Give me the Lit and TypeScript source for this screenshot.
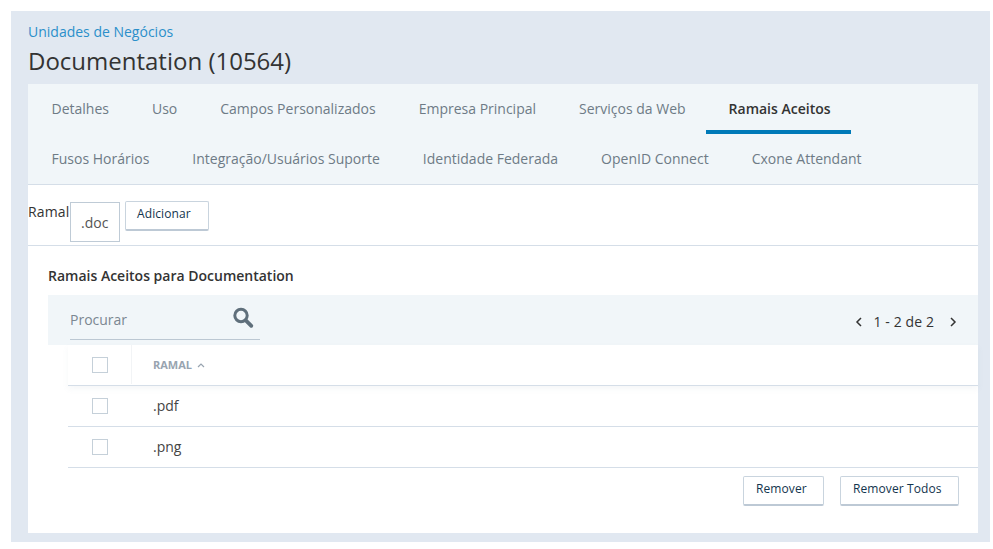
import { LitElement, html, css } from "lit";
import { customElement } from "lit/decorators.js";

const row1 = ["Detalhes", "Uso", "Campos Personalizados", "Empresa Principal", "Serviços da Web", "Ramais Aceitos"];
const row2 = ["Fusos Horários", "Integração/Usuários Suporte", "Identidade Federada", "OpenID Connect", "Cxone Attendant"];

@customElement("app-root")
export class AppRoot extends LitElement {
  static styles = css`
    :host { display: block; width: 993px; height: 549px; background: #fff; font-family: "Open Sans", sans-serif; color: #333; overflow: hidden; }
    * { box-sizing: border-box; }
    .panel { margin: 11px 3px 0 11px; height: 531px; background: #e1e8f1; padding: 11px 12px 9px 17px; display: flex; flex-direction: column; }
    .crumb { font-size: 14px; line-height: 19px; color: #2b8fca; }
    .title { font-size: 24px; line-height: 33px; color: #333; margin-top: 3px; height: 40px; }
    .card { flex: 1; background: #fff; display: flex; flex-direction: column; }
    .tabs { background: #f1f6f9; border-bottom: 1px solid #d5dee8; height: 101px; padding-left: 2px; }
    .tabrow { display: flex; height: 50px; }
    .tab { font-size: 14px; line-height: 50px; height: 50px; padding: 0 21.5px; color: #6e7b86; white-space: nowrap; }
    .tab.active { color: #333; font-weight: 600; border-bottom: 4px solid #007ab8; margin-left: -1.5px; padding: 0 20px 0 23px; }
    .form { height: 61px; border-bottom: 1px solid #d5dee8; display: flex; align-items: flex-start; }
    .form label { font-size: 14px; line-height: 19px; margin-top: 17px; color: #333; width: 42px; letter-spacing: 0.15px; }
    .input { width: 50px; height: 40px; margin-top: 17px; border: 1px solid #bfcbd6; font-size: 14px; line-height: 40px; padding-left: 10px; color: #555; }
    .btn { font-family: inherit; background: #fff; border: 1px solid #c9d4de; border-bottom: 2px solid #bdc9d5; border-radius: 2px; font-size: 12px; font-weight: 500; color: #12344d; padding: 0 0 0 12px; height: 30px; display: flex; align-items: flex-start; justify-content: flex-start; line-height: 23px; letter-spacing: 0.1px; }
    .add { width: 84px; margin: 16px 0 0 5px; padding-left: 11px; }
    .body { padding: 0 0 0 20px; display: flex; flex-direction: column; flex: 1; }
    h2 { margin: 20px 0 0; font-size: 14px; line-height: 19px; font-weight: 600; color: #333; height: 29px; }
    .toolbar { height: 50px; background: #f1f6f9; display: flex; align-items: flex-start; justify-content: space-between; padding: 0 21px 0 22px; }
    .search { width: 190px; height: 45px; border-bottom: 1px solid #bcc8d3; display: flex; justify-content: space-between; padding-right: 6px; font-size: 14px; color: #7b8791; line-height: 49px; }
    .search svg { margin-top: 12px; }
    .pager { display: flex; align-items: center; height: 53px; font-size: 14px; color: #333; }
    .pager svg:first-child { margin-left: 1px; }
    .pager span { margin: 0 15px 0 10.5px; letter-spacing: 0.1px; }
    .table { margin-left: 20px; }
    .head, .row { display: flex; align-items: stretch; border-bottom: 1px solid #d5dee8; }
    .head { height: 41px; box-shadow: 0 3px 6px rgba(120,140,160,0.07); }
    .row { height: 41px; }
    .cb { width: 64px; display: flex; align-items: center; justify-content: center; }
    .head .cb { border-right: 1px solid #f2f4f6; margin-bottom: 1px; }
    .box { display: block; width: 16px; height: 16px; border: 1px solid #c5d0d9; background: #fff; }
    .cell { font-size: 14px; padding: 0 0 2px 21px; display: flex; align-items: center; color: #444; }
    .th { font-size: 11px; font-weight: 700; color: #98a4b0; gap: 5px; padding-bottom: 1px; }
    .actions { display: flex; justify-content: flex-end; gap: 16px; padding: 8px 19px 0 0; }
    .rm1 { width: 81px; height: 30px; }
    .rm2 { width: 119px; height: 30px; }
  `;

  render() {
    const tab = (t: string) => html`<div class="tab ${t === "Ramais Aceitos" ? "active" : ""}">${t}</div>`;
    return html`
      <div class="panel">
        <div class="crumb">Unidades de Negócios</div>
        <div class="title">Documentation (10564)</div>
        <div class="card">
          <div class="tabs">
            <div class="tabrow">${row1.map(tab)}</div>
            <div class="tabrow">${row2.map(tab)}</div>
          </div>
          <div class="form">
            <label>Ramal</label>
            <div class="input">.doc</div>
            <button class="btn add">Adicionar</button>
          </div>
          <div class="body">
            <h2>Ramais Aceitos para Documentation</h2>
            <div class="toolbar">
              <div class="search">
                <span>Procurar</span>
                <svg width="22" height="22" viewBox="0 0 22 22" fill="none" stroke="#5f6f7b">
                  <circle cx="9" cy="8.5" r="6.2" stroke-width="3"></circle>
                  <path d="M13.8 13.3 L19.3 18.8" stroke-width="3.8" stroke-linecap="round"></path>
                </svg>
              </div>
              <div class="pager">
                <svg width="8" height="10" viewBox="0 0 8 10" fill="none" stroke="#333" stroke-width="1.5"><path d="M6 1 L2 5 L6 9"></path></svg>
                <span>1 - 2 de 2</span>
                <svg width="8" height="10" viewBox="0 0 8 10" fill="none" stroke="#333" stroke-width="1.5"><path d="M2 1 L6 5 L2 9"></path></svg>
              </div>
            </div>
            <div class="table">
              <div class="head">
                <div class="cb"><span class="box"></span></div>
                <div class="cell th">RAMAL
                  <svg width="8" height="6" viewBox="0 0 8 6" fill="none" stroke="#98a4b0" stroke-width="1.2"><path d="M1 5 L4 2 L7 5"></path></svg>
                </div>
              </div>
              <div class="row"><div class="cb"><span class="box"></span></div><div class="cell">.pdf</div></div>
              <div class="row"><div class="cb"><span class="box"></span></div><div class="cell">.png</div></div>
            </div>
            <div class="actions">
              <button class="btn rm1">Remover</button>
              <button class="btn rm2">Remover Todos</button>
            </div>
          </div>
        </div>
      </div>
    `;
  }
}
